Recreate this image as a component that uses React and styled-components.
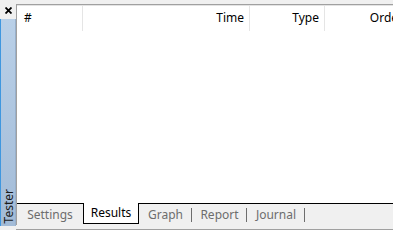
import React from "react";
import styled, { createGlobalStyle } from "styled-components";

const GlobalStyle = createGlobalStyle`
    html, body {
        margin: 0;
        padding: 0;
        background: #f0f0f0;
    }
    body {
        font-family: "Noto Sans", "Liberation Sans", sans-serif;
        font-size: 12px;
    }
`;

const Window = styled.div`
    display: flex;
    width: 393px;
    height: 230px;
    background: #f0f0f0;
    overflow: hidden;
`;

const SideStrip = styled.div`
    display: flex;
    flex-direction: column;
    width: 16px;
    flex-shrink: 0;
`;

const CloseBox = styled.div`
    display: flex;
    justify-content: center;
    align-items: flex-start;
    height: 19px;
    padding-top: 7px;
    box-sizing: border-box;
`;

const BlueBar = styled.div`
    flex: 1;
    display: flex;
    flex-direction: column;
    justify-content: flex-end;
    align-items: center;
    background: linear-gradient(to bottom, #b9d0e8, #a2bbd7);
    border-left: 1px solid #3f97df;
    border-right: 1px solid #98b0cb;
    margin-bottom: 4px;
    padding-bottom: 3px;
`;

const VerticalLabel = styled.span`
    writing-mode: vertical-rl;
    transform: rotate(180deg);
    color: #1b1b1b;
    font-size: 12px;
    line-height: 13px;
`;

const Main = styled.div`
    flex: 1;
    display: flex;
    flex-direction: column;
    padding-top: 4px;
    padding-bottom: 4px;
    border-bottom: 1px solid #a0a0a0;
    box-sizing: border-box;
`;

const Panel = styled.div`
    flex: 1;
    display: flex;
    flex-direction: column;
    background: #fff;
    border-top: 1px solid #a0a0a0;
    border-left: 1px solid #a0a0a0;
    box-shadow: inset 0 1px 0 #e3e3e3;
    min-height: 0;
`;

const HeaderRow = styled.div`
    display: flex;
    height: 25px;
    margin-top: 1px;
    flex-shrink: 0;
`;

const HeaderCell = styled.div`
    width: ${p => p.$width}px;
    flex-shrink: 0;
    display: flex;
    align-items: center;
    justify-content: ${p => (p.$right ? "flex-end" : "flex-start")};
    padding: ${p => (p.$right ? "0 5px 2px 0" : "0 0 2px 7px")};
    box-sizing: border-box;
    border-right: 1px solid #e5e5e5;
    color: #000;
    white-space: nowrap;
    overflow: hidden;
`;

const Body = styled.div`
    flex: 1;
`;

const TabBar = styled.div`
    display: flex;
    height: 21px;
    background: #f0f0f0;
    border-top: 1px solid #000;
    flex-shrink: 0;
`;

const Tab = styled.div`
    display: flex;
    align-items: center;
    justify-content: center;
    width: ${p => p.$width}px;
    box-sizing: border-box;
    color: ${p => (p.$active ? "#000" : "#6d6d6d")};
    background: ${p => (p.$active ? "#fff" : "transparent")};
    border: ${p => (p.$active ? "1px solid #000" : "none")};
    border-top: none;
    height: ${p => (p.$active ? "21px" : "20px")};
    margin-top: ${p => (p.$active ? "-1px" : "0")};
    padding-bottom: ${p => (p.$active ? "1px" : "0")};
    position: relative;

    &::after {
        content: "";
        display: ${p => (p.$separator ? "block" : "none")};
        position: absolute;
        right: 0;
        top: 4px;
        width: 1px;
        height: 14px;
        background: #6d6d6d;
    }
`;

function CloseIcon() {
    return (
        <svg width="7" height="7" viewBox="0 0 7 7">
            <path d="M0.5 0.5 L6.5 6.5 M6.5 0.5 L0.5 6.5" stroke="#000" strokeWidth="1.8" />
        </svg>
    );
}

const columns = [
    { title: "#", width: 66 },
    { title: "Time", width: 167, right: true },
    { title: "Type", width: 75, right: true },
    { title: "Order", width: 84, right: true },
];

const tabs = [
    { title: "Settings", width: 66 },
    { title: "Results", width: 56, active: true },
    { title: "Graph", width: 53, separator: true },
    { title: "Report", width: 55, separator: true },
    { title: "Journal", width: 58, separator: true },
];

export default function App() {
    return (
        <>
            <GlobalStyle />
            <Window>
                <SideStrip>
                    <CloseBox>
                        <CloseIcon />
                    </CloseBox>
                    <BlueBar>
                        <VerticalLabel>Tester</VerticalLabel>
                    </BlueBar>
                </SideStrip>
                <Main>
                    <Panel>
                        <HeaderRow>
                            {columns.map(col => (
                                <HeaderCell key={col.title} $width={col.width} $right={col.right}>
                                    {col.title}
                                </HeaderCell>
                            ))}
                        </HeaderRow>
                        <Body />
                        <TabBar>
                            {tabs.map(tab => (
                                <Tab
                                    key={tab.title}
                                    $width={tab.width}
                                    $active={tab.active}
                                    $separator={tab.separator}
                                >
                                    {tab.title}
                                </Tab>
                            ))}
                        </TabBar>
                    </Panel>
                </Main>
            </Window>
        </>
    );
}
